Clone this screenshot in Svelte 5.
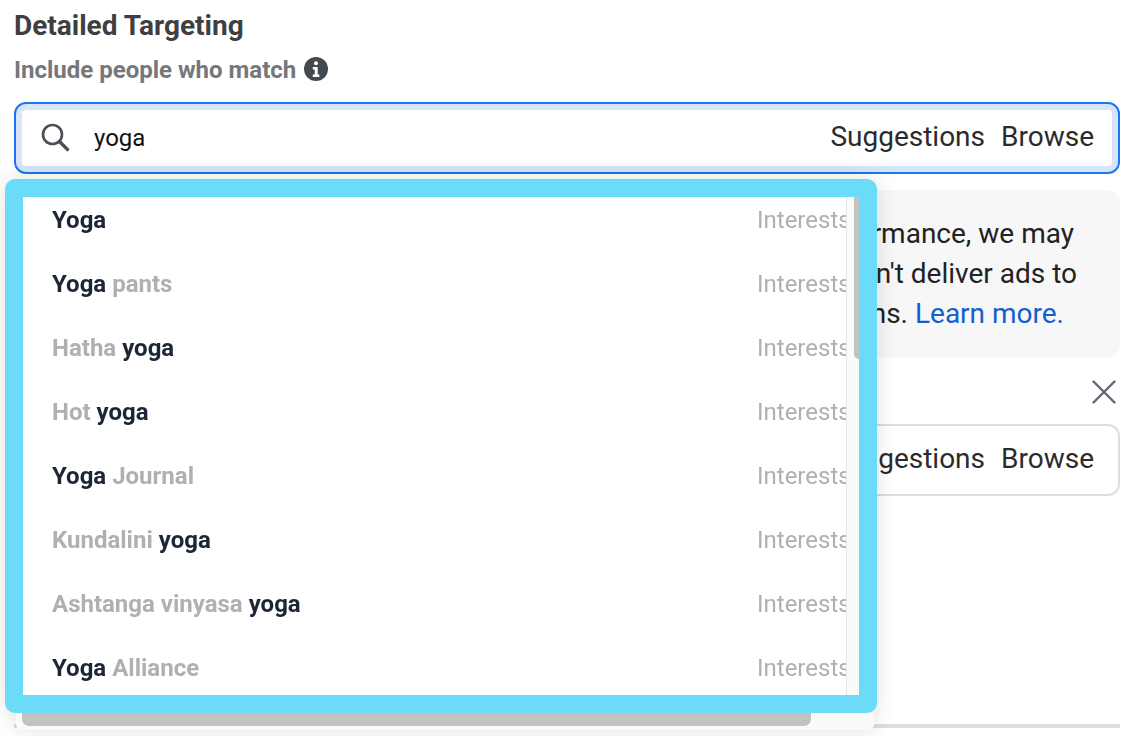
<script lang="ts">
  const items = [
    [['Yoga', true]],
    [['Yoga', true], [' pants', false]],
    [['Hatha ', false], ['yoga', true]],
    [['Hot ', false], ['yoga', true]],
    [['Yoga', true], [' Journal', false]],
    [['Kundalini ', false], ['yoga', true]],
    [['Ashtanga vinyasa ', false], ['yoga', true]],
    [['Yoga', true], [' Alliance', false]]
  ];
</script>

<div class="page">
  <h1>Detailed Targeting</h1>
  <div class="sub">
    <span>Include people who match</span>
    <svg class="info" viewBox="0 0 24 24" width="24" height="24">
      <circle cx="12" cy="12" r="12" fill="#444950" />
      <circle cx="12" cy="6.2" r="2" fill="#fff" />
      <path d="M8.8 10h4.9v7.6h1.7V20H8.8v-2.4h1.900v-5.200H8.800z" fill="#fff" />
    </svg>
  </div>

  <div class="search active">
    <svg class="glass" viewBox="0 0 30 30" width="30" height="30">
      <circle cx="12.5" cy="12.5" r="9.5" fill="none" stroke="#4b4f56" stroke-width="2.600" />
      <path d="M19.500 19.500l8 8" stroke="#4b4f56" stroke-width="3.200" stroke-linecap="round" />
    </svg>
    <span class="query">yoga</span>
    <span class="links"><span>Suggestions</span><span>Browse</span></span>
  </div>

  <div class="notice">
    <div class="one">To improve performance, we may</div>
    <div class="two">include people who don't deliver ads to</div>
    <div class="three">some locations. <a href="#learn">Learn more.</a></div>
  </div>

  <div class="closer">
    <svg viewBox="0 0 24 24" width="24" height="24">
      <path d="M1.500 1.500l21 21M22.500 1.500l-21 21" stroke="#606770" stroke-width="2.400" stroke-linecap="round" />
    </svg>
  </div>

  <div class="search plain">
    <span class="links"><span>Suggestions</span><span>Browse</span></span>
  </div>

  <div class="rule"></div>

  <div class="dropdown">
    <div class="frame">
      <div class="list">
        {#each items as parts}
          <div class="row">
            <span class="name">
              {#each parts as [text, hit]}<span class:hit>{text}</span>{/each}
            </span>
            <span class="kind">Interests</span>
          </div>
        {/each}
      </div>
      <div class="vtrack"><div class="vthumb"></div></div>
    </div>
    <div class="htrack"><div class="hthumb"></div></div>
  </div>
</div>

<style>
  :global(body) {
    background: #fff;
    font-family: Roboto, sans-serif;
    overflow: hidden;
  }
  .page {
    position: relative;
    width: 1130px;
    height: 736px;
    box-sizing: border-box;
    padding: 9px 10px 0 14px;
    overflow: hidden;
  }
  h1 {
    margin: 0;
    font-size: 28px;
    line-height: 34px;
    font-weight: 700;
    color: #3f3f41;
  }
  .sub {
    display: flex;
    align-items: center;
    gap: 8px;
    height: 34px;
    margin-top: 10px;
    font-size: 24px;
    font-weight: 700;
    color: #75777b;
  }
  .info {
    margin-top: -2px;
  }
  .search {
    display: flex;
    align-items: center;
    box-sizing: border-box;
    border-radius: 12px;
    background: #fff;
    font-size: 28px;
  }
  .search.active {
    height: 72px;
    margin-top: 15px;
    padding: 0 24px;
    border: 2px solid #1877f2;
    box-shadow: inset 0 0 0 6px #d8e4f9;
  }
  .search.plain {
    height: 72px;
    margin-top: 20px;
    padding: 0 24px;
    border: 2px solid #dadde1;
    justify-content: flex-end;
  }
  .glass {
    flex: none;
    margin-bottom: 2px;
  }
  .query {
    margin-left: 24px;
    font-size: 24px;
    color: #111;
  }
  .links {
    display: flex;
    gap: 16px;
    margin-left: auto;
    margin-bottom: 4px;
    color: #2b2b2d;
  }
  .notice {
    box-sizing: border-box;
    height: 168px;
    margin-top: 16px;
    padding-top: 24px;
    border-radius: 14px;
    background: #f7f7f7;
    font-size: 28px;
    line-height: 40px;
    color: #222;
    text-align: right;
    white-space: nowrap;
  }
  .one {
    padding-right: 46px;
  }
  .two {
    padding-right: 43px;
  }
  .three {
    padding-right: 56px;
  }
  .notice a {
    color: #1260cc;
    text-decoration: none;
  }
  .closer {
    display: flex;
    justify-content: flex-end;
    height: 24px;
    margin-top: 22px;
    padding-right: 4px;
  }
  .rule {
    height: 4px;
    margin-top: 228px;
    background: #dadde1;
  }
  .dropdown {
    position: absolute;
    left: 5px;
    top: 179px;
    width: 872px;
    filter: drop-shadow(0 0 10px rgba(0, 0, 0, 0.12));
  }
  .frame {
    display: flex;
    box-sizing: border-box;
    height: 534px;
    border: 18px solid #6adbf8;
    border-radius: 10px;
    background: #fff;
  }
  .list {
    width: 823px;
    height: 498px;
    overflow: hidden;
  }
  .row {
    display: grid;
    grid-template-columns: 705px 1fr;
    align-items: center;
    width: 900px;
    height: 64px;
    padding-left: 29px;
    font-size: 24px;
    white-space: pre;
  }
  .row:first-child {
    margin-top: -9px;
  }
  .name {
    font-weight: 700;
    color: #aeb0b4;
  }
  .hit {
    color: #1c2638;
  }
  .kind {
    color: #adb0b5;
  }
  .vtrack {
    box-sizing: border-box;
    width: 13px;
    height: 498px;
    padding-left: 7px;
    border-left: 1px solid #e8e8e8;
    background: #fafafa;
  }
  .vthumb {
    width: 5px;
    height: 162px;
    border-bottom-left-radius: 6px;
    background: #c2c2c2;
  }
  .htrack {
    box-sizing: border-box;
    width: 858px;
    height: 17px;
    margin-left: 11px;
    padding-left: 6px;
    border-radius: 0 0 6px 6px;
    background: #fafafa;
  }
  .hthumb {
    width: 789px;
    height: 13px;
    border-radius: 0 0 7px 7px;
    background: #c2c2c2;
  }
</style>
